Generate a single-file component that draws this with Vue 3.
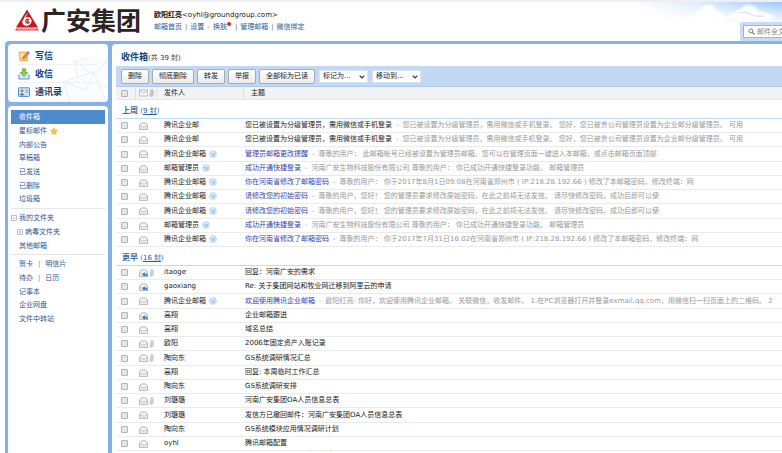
<script setup>
import { ref } from 'vue'

const query = ref('')

const topLinks = ['邮箱首页', '设置', '换肤', '管理邮箱', '微信绑定']

const folders = ['收件箱', '星标邮件', '内部公告', '草稿箱', '已发送', '已删除', '垃圾箱']
const tools = [['贺卡', '明信片'], ['待办', '日历'], ['记事本'], ['企业网盘'], ['文件中转站']]
const actions = ['删除', '彻底删除', '转发', '举报', '全部标为已读']

const groups = [
  {
    name: '上周',
    count: 9,
    mails: [
      { from: '腾讯企业邮', subject: '您已被设置为分级管理员，需用微信或手机登录', text: '您已被设置为分级管理员，需用微信或手机登录。 您好，您已被贵公司管理员设置为企业邮分级管理员。 可用' },
      { from: '腾讯企业邮', subject: '您已被设置为分级管理员，需用微信或手机登录', text: '您已被设置为分级管理员，需用微信或手机登录。 您好，您已被贵公司管理员设置为企业邮分级管理员。 可用' },
      { from: '腾讯企业邮箱', sys: true, subject: '管理员邮箱更改提醒', text: '尊敬的用户： 此邮箱帐号已经被设置为管理员邮箱。您可以在管理页面一键进入本邮箱，或点击邮箱页面顶部' },
      { from: '邮箱管理员', sys: true, subject: '成功开通快捷登录', text: '河南广安生物科技股份有限公司 尊敬的用户： 你已成功开通快捷登录功能。 邮箱管理员' },
      { from: '腾讯企业邮箱', sys: true, subject: '你在河南省修改了邮箱密码', text: '尊敬的用户： 你于2017年8月1日09:08在河南省郑州市 ( IP:218.28.192.66 ) 修改了本邮箱密码，修改终端：网' },
      { from: '腾讯企业邮箱', sys: true, subject: '请修改您的初始密码', text: '尊敬的用户，您好！ 您的管理员要求修改原始密码，在此之前将无法发信。 请尽快修改密码，成功后即可以使' },
      { from: '腾讯企业邮箱', sys: true, subject: '请修改您的初始密码', text: '尊敬的用户，您好！ 您的管理员要求修改原始密码，在此之前将无法发信。 请尽快修改密码，成功后即可以使' },
      { from: '邮箱管理员', sys: true, subject: '成功开通快捷登录', text: '河南广安生物科技股份有限公司 尊敬的用户： 你已成功开通快捷登录功能。 邮箱管理员' },
      { from: '腾讯企业邮箱', sys: true, subject: '你在河南省修改了邮箱密码', text: '尊敬的用户： 你于2017年7月31日16:02在河南省郑州市 ( IP:218.28.192.66 ) 修改了本邮箱密码，修改终端：网' },
    ],
  },
  {
    name: '更早',
    count: 16,
    mails: [
      { from: 'itaoge', replied: true, clip: true, subject: '回复：河南广安的需求' },
      { from: 'gaoxiang', replied: true, subject: 'Re: 关于集团网站和牧业网迁移到阿里云的申请' },
      { from: '腾讯企业邮箱', sys: true, subject: '欢迎使用腾讯企业邮箱', text: '欧阳红亮: 你好，欢迎使用腾讯企业邮箱。 关联微信，收发邮件。 1.在PC浏览器打开并登录exmail.qq.com，用微信扫一扫页面上的二维码。 2' },
      { from: '高翔', replied: true, subject: '企业邮箱跟进' },
      { from: '高翔', subject: '域名总结' },
      { from: '欧阳', clip: true, subject: '2006年固定资产入账记录' },
      { from: '陶向东', clip: true, subject: 'GS系统调研情况汇总' },
      { from: '高翔', subject: '回复: 本周临时工作汇总' },
      { from: '陶向东', subject: 'GS系统调研安排' },
      { from: '刘璐璐', clip: true, subject: '河南广安集团OA人员信息总表' },
      { from: '刘璐璐', subject: '发信方已撤回邮件：河南广安集团OA人员信息总表' },
      { from: '陶向东', subject: 'GS系统模块应用情况调研计划' },
      { from: 'oyhl', subject: '腾讯邮箱配置' },
      { from: 'oyhl', subject: 'groundgroup 人员信息总表' },
    ],
  },
]
</script>

<template>
  <div class="page">
    <header class="top">
      <a class="logo" href="#">
        <svg class="mark" viewBox="0 0 24 22" aria-hidden="true">
          <path d="M12 0.6 L23 18.6 H1 Z" fill="#c8181e" />
          <path d="M7.2 12.3 C8.8 8.2 12 7 14.6 8.6 C17.8 10.6 17 15.6 13 16.6 C9.6 17.4 7 15.6 7.2 12.3 Z" fill="#fff" />
          <path d="M12.4 4.6 C9.8 7.4 8.8 10 9.8 12.6" fill="none" stroke="#fff" stroke-width="1" />
          <path d="M14.2 10.6 C12.4 9.4 10.6 10.8 10.8 12.6 C11 14.4 13.4 14.8 14.4 13.2" fill="none" stroke="#c8181e" stroke-width="1.3" />
          <circle cx="12.8" cy="12.3" r="1" fill="#c8181e" />
          <path d="M1 19.4 H23 L23.8 21.4 H0.2 Z" fill="#d2474b" />
          <path d="M3 20.4 H21" stroke="#f6dada" stroke-width="0.7" stroke-dasharray="1.4 0.8" />
        </svg>
        <span class="brand">广安集团</span>
      </a>
      <div class="account">
        <div class="who"><b>欧阳红亮</b>&lt;oyhl@groundgroup.com&gt;</div>
        <nav class="links">
          <template v-for="(l, i) in topLinks" :key="l">
            <i v-if="i">{{ i === 2 ? '-' : '|' }}</i><a href="#">{{ l }}<em v-if="i === 2" class="dot"></em></a>
          </template>
        </nav>
      </div>
      <div class="sky">
        <svg class="clouds" viewBox="0 0 142 24" preserveAspectRatio="xMaxYMin slice" aria-hidden="true">
          <defs>
            <linearGradient id="skyX" x1="0" x2="1" y1="0.3" y2="0">
              <stop offset="0" stop-color="#fff" />
              <stop offset="0.45" stop-color="#dcebfd" />
              <stop offset="1" stop-color="#9cc6fb" />
            </linearGradient>
            <linearGradient id="skyY" x1="0" x2="0" y1="0" y2="1">
              <stop offset="0" stop-color="#fff" stop-opacity="0" />
              <stop offset="1" stop-color="#fff" />
            </linearGradient>
            <filter id="soft"><feGaussianBlur stdDeviation="0.8" /></filter>
          </defs>
          <rect width="142" height="24" fill="url(#skyX)" />
          <rect width="142" height="24" fill="url(#skyY)" />
          <g fill="#fff" filter="url(#soft)">
            <path d="M52 15 Q57 11 60 7 Q65 1 71 3 Q75 4 76 9 Q83 11 88 17 Q70 24 52 18 Z" />
            <path d="M90 12 Q97 9 100 8 Q105 1 112 4 Q117 5 118 9 Q128 10 136 16 Q112 22 88 16 Z" />
          </g>
          <path d="M99 11 Q106 9 110 12 T124 14" fill="none" stroke="#dbe8f8" stroke-width="1.5" />
        </svg>
        <label class="search">
          <span class="field">
            <svg viewBox="0 0 8 8" aria-hidden="true"><circle cx="3.3" cy="3.3" r="2.3" fill="none" stroke="#777" stroke-width="1.1" /><path d="M5 5 L7.4 7.4" stroke="#777" stroke-width="1.4" /></svg>
            <input v-model="query" type="text" placeholder="邮件全文搜索" aria-label="邮件全文搜索" />
          </span>
        </label>
      </div>
    </header>

    <div class="frame">
      <aside class="side">
        <nav class="card main-nav">
          <svg class="watermark" viewBox="0 0 46 44" aria-hidden="true">
            <g fill="#fbfcfd" stroke="#edf0f4" stroke-width="1.2">
              <path d="M12 3 L48 -4 V28 L18 32 Z" />
              <path d="M12 3 L32 18 L48 -2" fill="none" />
              <path d="M1 24 L32 14 L44 44 H8 Z" />
              <path d="M1 24 L24 32 L32 14" fill="none" />
            </g>
          </svg>
          <a href="#">
            <svg viewBox="0 0 12 12" aria-hidden="true"><path d="M1 2 H8.5 L9.5 10.5 H2 Z" fill="#f9d287" stroke="#dda650" stroke-width="0.8" /><path d="M2.6 4.4 H7 M3 6.2 H6 M3.2 8 H5.4" stroke="#fff3d6" stroke-width="0.8" /><path d="M4.4 9 L5 6.8 L9.8 1.4 L11.6 3 L6.7 8.3 Z" fill="#f0823a" stroke="#c25a1c" stroke-width="0.5" /><path d="M9 2.3 L9.8 1.4 L11.6 3 L10.8 3.9 Z" fill="#5b9be0" /></svg>写信</a>
          <a href="#">
            <svg viewBox="0 0 12 12" aria-hidden="true"><path d="M1 6.4 V11 H11 V6.4" fill="#d7e9f8" stroke="#5c9bd3" stroke-width="1.1" /><path d="M4.3 0.8 H7.7 V4.6 H9.8 L6 8.6 L2.2 4.6 H4.3 Z" fill="#8ccb58" stroke="#55a02e" stroke-width="0.7" /></svg>收信</a>
          <a href="#">
            <svg viewBox="0 0 12 12" aria-hidden="true"><rect x="0.5" y="1.8" width="11" height="8.6" rx="0.6" fill="#d5e8fa" stroke="#3f7fc4" stroke-width="0.9" /><circle cx="4" cy="4.7" r="1.5" fill="#c7793a" /><path d="M1.7 9.2 Q4 5.4 6.3 9.2 Z" fill="#2f62a8" /><path d="M7.4 4.4 H10.2 M7.4 6.3 H10.2" stroke="#5b8fcb" stroke-width="0.8" /></svg>通讯录</a>
        </nav>
        <nav class="card folders">
          <ul>
            <li v-for="(f, i) in folders" :key="f">
              <a href="#" :class="{ on: i === 0 }">{{ f }}<svg v-if="i === 1" class="star" viewBox="0 0 10 10" aria-hidden="true"><path d="M5 0.6 L6.4 3.6 L9.7 4 L7.3 6.2 L7.9 9.5 L5 7.9 L2.1 9.5 L2.7 6.2 L0.3 4 L3.6 3.6 Z" fill="#fdc544" stroke="#e9a52a" stroke-width="0.5" /></svg></a>
            </li>
          </ul>
          <ul class="tree">
            <li><button class="twist" type="button" aria-label="折叠"><svg viewBox="0 0 6 6"><path d="M0.5 0.5 H5.5 V5.5 H0.5 Z M1.5 3 H4.5" fill="none" stroke="#9aa5b2" stroke-width="0.7" /></svg></button><a href="#">我的文件夹</a></li>
            <li class="sub"><button class="twist" type="button" aria-label="展开"><svg viewBox="0 0 6 6"><path d="M0.5 0.5 H5.5 V5.5 H0.5 Z M1.5 3 H4.5 M3 1.5 V4.5" fill="none" stroke="#9aa5b2" stroke-width="0.7" /></svg></button><a href="#">病毒文件夹</a></li>
            <li><a class="plain" href="#">其他邮箱</a></li>
          </ul>
          <ul>
            <li v-for="row in tools" :key="row[0]" class="pair">
              <template v-for="(t, i) in row" :key="t"><i v-if="i">|</i><a href="#">{{ t }}</a></template>
            </li>
          </ul>
        </nav>
      </aside>

      <main class="inbox">
        <h1>收件箱<small>(共 39 封)</small></h1>
        <div class="toolbar">
          <button v-for="a in actions" :key="a" type="button">{{ a }}</button>
          <span class="pick">
            <select aria-label="标记为"><option>标记为...</option></select>
            <svg viewBox="0 0 6 4" aria-hidden="true"><path d="M0.7 0.7 L3 3 L5.3 0.7" fill="none" stroke="#333" stroke-width="1.2" /></svg>
          </span>
          <span class="pick">
            <select aria-label="移动到"><option>移动到...</option></select>
            <svg viewBox="0 0 6 4" aria-hidden="true"><path d="M0.7 0.7 L3 3 L5.3 0.7" fill="none" stroke="#333" stroke-width="1.2" /></svg>
          </span>
        </div>
        <table>
          <colgroup><col class="c-check" /><col class="c-icon" /><col class="c-from" /><col /></colgroup>
          <thead>
            <tr>
              <th><input type="checkbox" aria-label="全选" /></th>
              <th class="rule">
                <span class="icons">
                  <svg class="env" viewBox="0 0 9 8" aria-hidden="true"><path d="M0.5 1 H8.5 V7 H0.5 Z M0.5 1 L4.5 4.6 L8.5 1" fill="#f8f8f8" stroke="#b4b4b4" stroke-width="0.8" /></svg>
                  <svg class="clip" viewBox="0 0 5 8" aria-hidden="true"><path d="M1 5 V6 Q1 7.4 2.4 7.4 T4 6 L4.2 2 Q4.2 0.6 3 0.6 T1.8 2 V5.4 Q2.4 6.2 3 5.4 V2.6" fill="#ddd" stroke="#b0b0b0" stroke-width="0.8" /></svg>
                </span>
              </th>
              <th class="rule from">发件人</th>
              <th class="rule topic">主题</th>
            </tr>
          </thead>
          <tbody v-for="g in groups" :key="g.name">
            <tr class="group">
              <th colspan="4" scope="rowgroup"><b>{{ g.name }}</b> (<a href="#">{{ g.count }} 封</a>)</th>
            </tr>
            <tr v-for="(m, i) in g.mails" :key="i" class="mail">
              <td><input type="checkbox" :aria-label="m.subject" /></td>
              <td>
                <span class="icons">
                  <svg class="env" viewBox="0 0 9 8" aria-hidden="true">
                    <path d="M0.5 3.2 L2.4 0.9 H6.6 L8.5 3.2 V7.4 H0.5 Z" fill="#f3f3f3" stroke="#a6a6a6" stroke-width="0.8" />
                    <path d="M0.7 3.4 L3 5 H6 L8.3 3.4" fill="none" stroke="#b0b0b0" stroke-width="0.7" />
                    <path v-if="m.replied" d="M3 5.5 L5.7 3 V4.5 Q9 4.4 9 8 Q8 6.6 5.7 6.6 V8 Z" fill="#3f7fc0" />
                  </svg>
                  <svg v-if="m.clip" class="clip" viewBox="0 0 5 8" aria-hidden="true"><path d="M1 5 V6 Q1 7.4 2.4 7.4 T4 6 L4.2 2 Q4.2 0.6 3 0.6 T1.8 2 V5.4 Q2.4 6.2 3 5.4 V2.6" fill="#d3e1f1" stroke="#a9c1dc" stroke-width="0.8" /></svg>
                </span>
              </td>
              <td class="from">
                {{ m.from }}<svg v-if="m.sys" class="badge" viewBox="0 0 8 8" aria-hidden="true"><circle cx="4" cy="4" r="3.4" fill="#dcedf9" stroke="#b3d3ec" stroke-width="0.8" /><path d="M1.8 3 L4.2 4.4 L6.4 2.6 M4.2 4.4 L3.6 6.6 M5.2 4.2 V5.8" fill="none" stroke="#78b0de" stroke-width="0.8" /></svg>
              </td>
              <td class="subject">
                <a href="#" :class="{ sys: m.sys }">{{ m.subject }}</a><span v-if="m.text" class="digest"><i>-</i>{{ m.text }}</span>
              </td>
            </tr>
          </tbody>
        </table>
      </main>
    </div>
  </div>
</template>

<style>
html,
body,
#app {
  height: 100%;
}
body {
  margin: 0;
  overflow: hidden;
  background: #fff;
}
</style>

<style scoped>
.page {
  min-height: 100%;
  display: flex;
  flex-direction: column;
  border-top: 2px solid #efeff1;
  box-sizing: border-box;
  font: 7px/14px "DejaVu Sans", "Noto Sans CJK SC", sans-serif;
  color: #222;
}
a {
  color: #2a5b97;
  text-decoration: none;
}
i,
em {
  font-style: normal;
}
svg {
  display: block;
  flex: none;
}
ul {
  margin: 0;
  padding: 0;
  list-style: none;
}
button,
input,
select {
  font: inherit;
  color: inherit;
  margin: 0;
  box-sizing: border-box;
}
.top {
  display: flex;
  height: 39px;
  padding-left: 15px;
}
.logo {
  display: flex;
  align-items: center;
  gap: 2px;
  width: 139px;
  padding-bottom: 4px;
}
.mark {
  width: 24px;
  height: 22px;
}
.brand {
  font: 700 25px/30px "Noto Sans CJK SC", sans-serif;
  color: #2d2424;
  white-space: nowrap;
}
.logo .brand {
  padding-bottom: 2px;
}
.account {
  padding-top: 7px;
  line-height: 12px;
  white-space: nowrap;
}
.who b {
  color: #111;
}
.links i {
  margin: 0 3px;
  color: #777;
}
.links a {
  position: relative;
}
.dot {
  position: absolute;
  top: -1px;
  right: -4px;
  width: 4px;
  height: 4px;
  border-radius: 50%;
  background: #e02a1c;
}
.links a:nth-of-type(3) {
  margin-right: 5px;
}
.sky {
  flex: 1;
  display: flex;
  align-items: flex-end;
  justify-content: flex-end;
  position: relative;
}
.clouds {
  position: absolute;
  top: 0;
  right: 0;
  width: 142px;
  height: 24px;
}
.search {
  position: relative;
  width: 42px;
  height: 19px;
  padding: 3px 0 3px 3px;
  box-sizing: border-box;
  border-radius: 3px 0 0 0;
  background: #c8ddf5;
}
.field {
  display: flex;
  align-items: center;
  gap: 2px;
  height: 13px;
  padding-left: 4px;
  box-sizing: border-box;
  border: 1px solid #aab4c0;
  border-right: 0;
  background: #fff;
}
.field svg {
  width: 7px;
  height: 7px;
}
.field input {
  width: 26px;
  height: 11px;
  padding: 0;
  border: 0;
  outline: 0;
  background: none;
}
.field input::placeholder {
  color: #888;
  opacity: 1;
}
.frame {
  flex: 1;
  display: grid;
  grid-template-columns: 100px minmax(0, 1fr);
  gap: 4px;
  margin-left: 5px;
  padding: 3px 0 0 3px;
  border-radius: 4px 0 0 0;
  background: #86b1e6;
}
.side {
  display: flex;
  flex-direction: column;
  gap: 4px;
}
.card {
  background: #fff;
  border-radius: 4px;
}
.main-nav {
  position: relative;
  height: 58px;
  padding: 3px 10px;
  box-sizing: border-box;
  overflow: hidden;
}
.watermark {
  position: absolute;
  right: 0;
  bottom: 0;
  width: 46px;
  height: 44px;
}
.main-nav a {
  position: relative;
  display: flex;
  align-items: center;
  gap: 5px;
  height: 18px;
  box-sizing: border-box;
  font-weight: 700;
  font-size: 9px;
  color: #1c3f70;
}
.main-nav a:not(:last-child) {
  border-bottom: 1px solid #eef1f5;
}
.main-nav a svg {
  width: 12px;
  height: 12px;
}
.folders {
  flex: 1;
  padding: 4px 3px;
  border-radius: 4px 4px 0 0;
}
.folders ul + ul {
  margin-top: 2px;
  padding-top: 2px;
  border-top: 1px solid #e6e6e6;
}
.folders li {
  display: flex;
  height: 14px;
}
.folders li:nth-child(3n) {
  height: 13px;
}
.folders a {
  display: flex;
  align-items: center;
  gap: 3px;
}
.folders ul:first-child a {
  flex: 1;
  padding-left: 8px;
}
.folders a.on {
  background: #4f8acb;
  color: #fff;
}
.star {
  width: 8px;
  height: 8px;
}
.twist {
  display: flex;
  align-items: center;
  width: 8px;
  padding: 0;
  border: 0;
  background: none;
}
.twist svg {
  width: 6px;
  height: 6px;
}
.sub {
  padding-left: 6px;
}
.plain,
.pair {
  padding-left: 8px;
}
.pair i {
  margin: 0 5px;
  color: #888;
}
.inbox {
  padding: 6px 0 0 4px;
  border-radius: 4px 0 0 0;
  background: #fff;
}
h1 {
  margin: 0;
  padding-left: 5px;
  font-size: 9px;
  line-height: 15px;
  color: #1c3f70;
}
h1 small {
  font-size: 7px;
  font-weight: 400;
  color: #333;
}
.toolbar {
  display: flex;
  align-items: center;
  gap: 3px;
  height: 21px;
  padding-left: 5px;
  box-sizing: border-box;
  border-bottom: 1px solid #b0c9e8;
  background: #c3d8f2;
}
.toolbar button {
  height: 15px;
  padding: 0 6px;
  border: 1px solid #a5abb3;
  border-radius: 2px;
  background: linear-gradient(#fff, #ebebeb);
  line-height: 12px;
  white-space: nowrap;
}
.pick {
  position: relative;
  height: 13px;
  margin-left: 1px;
}
.pick select {
  display: block;
  width: 49px;
  height: 13px;
  padding: 0 3px;
  border: 1px solid #d8e4f3;
  border-radius: 0;
  background: #fff;
  appearance: none;
  line-height: 11px;
}
.pick svg {
  position: absolute;
  top: 5px;
  right: 3px;
  width: 6px;
  height: 4px;
  pointer-events: none;
}
table {
  width: 100%;
  table-layout: fixed;
  border-collapse: separate;
  border-spacing: 0;
}
.c-check {
  width: 19px;
}
.c-icon {
  width: 21px;
}
.c-from {
  width: 87px;
}
th,
td {
  padding: 0;
  height: 13px;
  line-height: 13px;
  text-align: left;
  font-weight: 400;
  white-space: nowrap;
  overflow: hidden;
}
thead th {
  height: 12px;
  line-height: 12px;
  background: #f2f3f5;
  border-bottom: 1px solid #e6e7ea;
}
.rule {
  border-left: 1px solid #dcdee1;
}
thead .rule.from {
  border-left-color: #e6e7ea;
}
.topic {
  padding-left: 7px;
}
td.from,
th.from {
  padding-left: 8px;
}
th.from {
  padding-left: 7px;
}
input[type="checkbox"] {
  display: block;
  width: 7px;
  height: 7px;
  margin-left: 5px;
  appearance: none;
  border: 1px solid #b4b4b4;
  border-radius: 1px;
  background: #e6e6e6;
}
.icons {
  display: flex;
  align-items: center;
  gap: 1px;
  padding-left: 3px;
}
td .icons {
  padding-left: 4px;
}
.env {
  width: 9px;
  height: 8px;
}
.clip {
  width: 5px;
  height: 8px;
}
.group th {
  height: 18px;
  padding: 4px 0 0 6px;
  box-sizing: border-box;
  border-bottom: 1px solid #c3d9ee;
  line-height: 13px;
  color: #3d6ea8;
}
.group b {
  font-size: 8px;
}
.group a {
  text-decoration: underline;
}
.mail td {
  border-bottom: 1px solid #ebebeb;
}
.mail:nth-child(4n) td {
  height: 14px;
}
.badge {
  display: inline-block;
  width: 8px;
  height: 8px;
  margin-left: 3px;
  vertical-align: -2px;
}
.subject {
  padding-left: 2px;
}
.subject a {
  color: #222;
}
.subject a.sys {
  color: #3344ac;
}
.digest {
  color: #999;
}
.digest i {
  margin: 0 4px;
}
</style>
